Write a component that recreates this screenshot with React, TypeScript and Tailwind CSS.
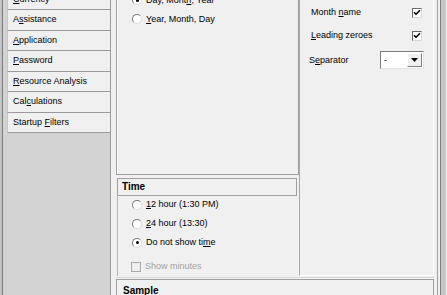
import React from 'react'

const navItems = [
  { label: 'Currency', u: 0 },
  { label: 'Assistance', u: 1 },
  { label: 'Application', u: 0 },
  { label: 'Password', u: 0 },
  { label: 'Resource Analysis', u: 0 },
  { label: 'Calculations', u: 3 },
  { label: 'Startup Filters', u: 8 },
]

function Mnemonic({ label, u }: { label: string; u?: number }) {
  if (u === undefined || u < 0) return <span className="whitespace-pre">{label}</span>
  return (
    <span className="whitespace-pre">
      {label.slice(0, u)}
      <span className="underline underline-offset-1">{label[u]}</span>
      {label.slice(u + 1)}
    </span>
  )
}

function Radio({ checked }: { checked?: boolean }) {
  return (
    <span className="relative inline-block w-[10px] h-[10px] shrink-0 rounded-full bg-white border border-t-[#7a7a7a] border-l-[#7a7a7a] border-r-[#dcdcdc] border-b-[#dcdcdc]">
      {checked && <span className="absolute left-[2.5px] top-[2.5px] w-[3px] h-[3px] rounded-full bg-black" />}
    </span>
  )
}

function Check({ checked, disabled }: { checked?: boolean; disabled?: boolean }) {
  return (
    <span
      className={`flex items-center justify-center w-[10px] h-[10px] shrink-0 border ${
        disabled
          ? 'bg-[#f0f0f0] border-[#a8a8a8]'
          : 'bg-white border-t-[#6a6a6a] border-l-[#6a6a6a] border-r-[#d8d8d8] border-b-[#d8d8d8]'
      }`}
    >
      {checked && (
        <svg width="8" height="7" viewBox="0 0 8 7">
          <path d="M1 3.2 L3 5.2 L7 1.2" fill="none" stroke="#000" strokeWidth="1.6" />
        </svg>
      )}
    </span>
  )
}

function RadioRow({ label, u, checked }: { label: string; u: number; checked?: boolean }) {
  return (
    <div className="flex items-center h-[19px] pl-[14px] gap-[4px]">
      <Radio checked={checked} />
      <Mnemonic label={label} u={u} />
    </div>
  )
}

export default function App() {
  return (
    <div className="w-[447px] h-[295px] overflow-hidden flex bg-[#f0f0f0] text-black text-[9px] leading-none font-['Liberation_Sans',Arial,sans-serif]">
      {/* left strip */}
      <div className="w-[2px] bg-[#c4c4c4]" />

      {/* nav list */}
      <div className="w-[109px] flex flex-col bg-[#d3d3d3] border-l border-[#7c7c7c] border-r border-r-[#9c9c9c] pl-[4px]">
        <div className="-mt-[10.5px] flex flex-col">
          {navItems.map((it) => (
            <div
              key={it.label}
              className="h-[20.5px] flex items-center pl-[5px] bg-[#f0f0f0] border-l border-[#c8c8c8] border-b border-b-[#9a9a9a]"
            >
              <Mnemonic label={it.label} u={it.u} />
            </div>
          ))}
        </div>
      </div>

      <div className="w-[5px]" />

      {/* main area */}
      <div className="w-[318px] flex flex-col">
        <div className="h-[282px] flex">
          {/* middle column */}
          <div className="w-[183px] flex flex-col">
            <div className="h-[175px] border-l border-r border-b border-[#a0a0a0] shadow-[inset_1px_0_0_#fff]">
              <div className="-mt-[9.5px] flex flex-col pl-[1px]">
                <RadioRow label="Day, Month, Year" u={9} checked />
                <RadioRow label="Year, Month, Day" u={0} />
              </div>
            </div>
            <div className="mt-[3px] ml-[1px] mr-[2px] h-[18px] flex items-center pl-[4px] border border-[#a0a0a0] text-[10px] font-bold">
              Time
            </div>
            <div className="flex-1 ml-[1px] border-l border-[#b4b4b4] flex flex-col -mt-[1px]">
              <RadioRow label="12 hour (1:30 PM)" u={0} />
              <RadioRow label="24 hour (13:30)" u={0} />
              <RadioRow label="Do not show time" u={14} checked />
              <div className="flex items-center h-[19px] mt-[5px] pl-[13px] gap-[4px] text-[#a3a3a3]">
                <Check disabled />
                <span>Show minutes</span>
              </div>
            </div>
          </div>

          {/* right column */}
          <div className="flex-1 border-l border-[#a8a8a8] border-r border-r-white border-b border-b-white flex flex-col pl-[11px] pr-[11px]">
            <div className="flex items-center justify-between h-[11px] mt-[7px]">
              <Mnemonic label="Month name" u={6} />
              <Check checked />
            </div>
            <div className="flex items-center justify-between h-[11px] mt-[12px]">
              <Mnemonic label="Leading zeroes" u={0} />
              <Check checked />
            </div>
            <div className="flex items-center justify-between h-[18px] mt-[10px] -ml-[2px]">
              <Mnemonic label="Separator" u={1} />
              <div className="w-[44px] h-[18px] flex items-center bg-white border border-t-[#7a7a7a] border-l-[#7a7a7a] border-r-[#e4e4e4] border-b-[#e4e4e4] -mr-[2px]">
                <span className="flex-1 pl-[3px]">-</span>
                <span className="w-[15px] h-[14px] mr-[1px] flex items-center justify-center bg-[#f0f0f0] border border-t-white border-l-white border-r-[#808080] border-b-[#808080]">
                  <svg width="7" height="4" viewBox="0 0 7 4">
                    <path d="M0 0 H7 L3.5 4 Z" fill="#000" />
                  </svg>
                </span>
              </div>
            </div>
          </div>
        </div>

        <div className="h-[2px] mt-[1px] border-t border-[#d8d8d8]" />

        {/* sample */}
        <div className="mt-[1px] h-[18px] flex items-start pl-[6px] pt-[6px] border border-[#a0a0a0] text-[10px] font-bold">
          Sample
        </div>
      </div>

      {/* right edge */}
      <div className="w-[3px]" />
      <div className="w-[1px] bg-[#a0a0a0]" />
      <div className="w-[2px] bg-[#f0f0f0]" />
      <div className="w-[1px] bg-[#808080]" />
      <div className="w-[5px] bg-[#c8c8c8]" />
    </div>
  )
}
